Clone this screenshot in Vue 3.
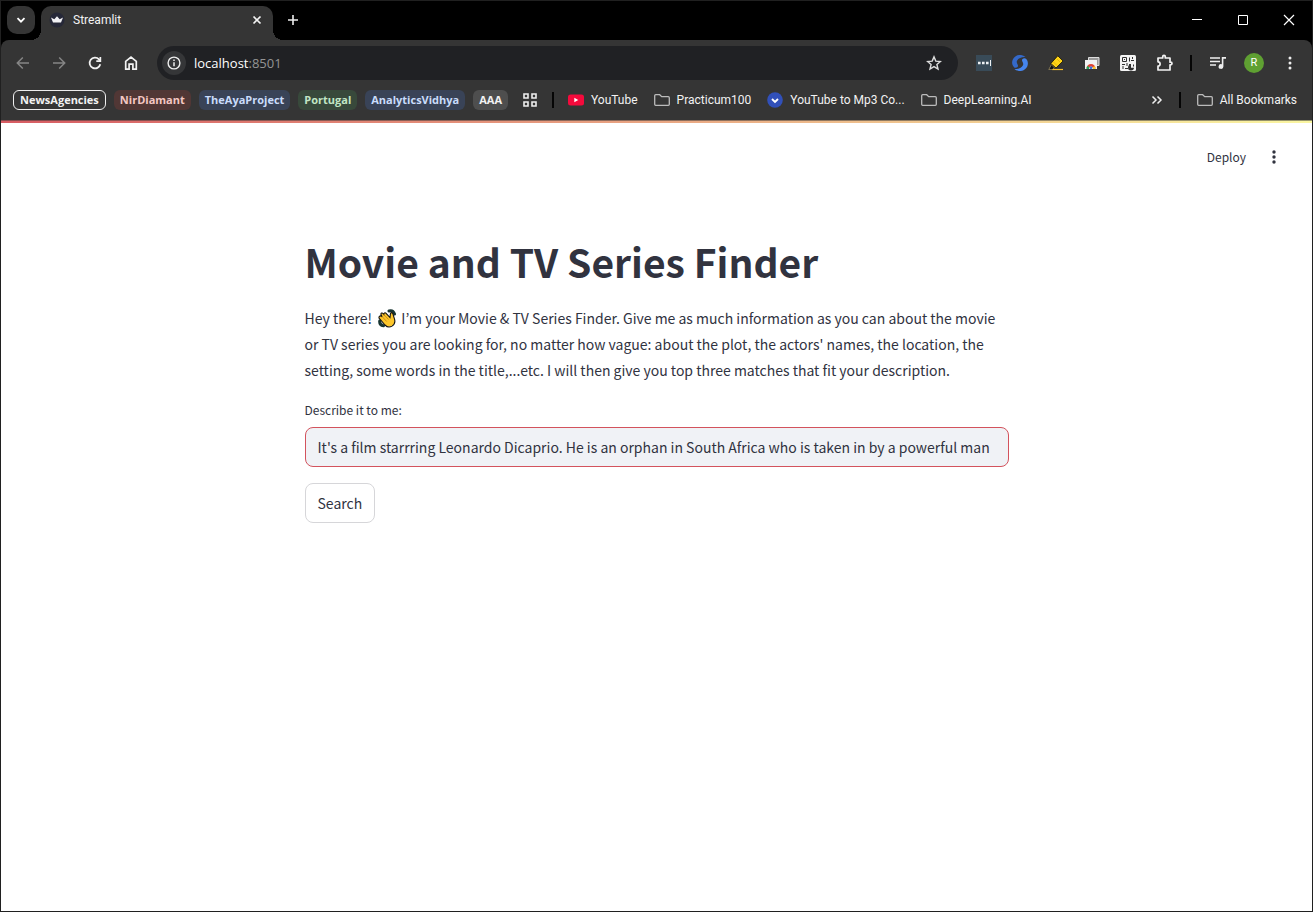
<script setup>
import { ref } from 'vue'

const query = ref("It's a film starrring Leonardo Dicaprio. He is an orphan in South Africa who is taken in by a powerful man")
const address = 'localhost:8501'
const groups = [
  { name: 'NewsAgencies', tone: 'outlined' },
  { name: 'NirDiamant', tone: 'red' },
  { name: 'TheAyaProject', tone: 'blue' },
  { name: 'Portugal', tone: 'green' },
  { name: 'AnalyticsVidhya', tone: 'blue' },
  { name: 'AAA', tone: 'grey' },
]
const bookmarks = [
  { name: 'YouTube', icon: 'youtube' },
  { name: 'Practicum100', icon: 'folder' },
  { name: 'YouTube to Mp3 Co...', icon: 'down' },
  { name: 'DeepLearning.AI', icon: 'folder' },
]
</script>

<template>
  <div class="window">
    <header class="tabstrip">
      <button class="tab-search" aria-label="Search tabs">
        <svg width="12" height="12" viewBox="0 0 12 12"><path d="M2.500 4.200 6 7.700l3.500-3.500" fill="none" stroke="#fff" stroke-width="1.800" /></svg>
      </button>
      <div class="tab">
        <svg width="16" height="16" viewBox="0 0 16 16">
          <circle cx="8" cy="8" r="7.500" fill="#262838" />
          <path d="M2 5.500 5.300 7.200 8 4.300l2.700 2.900L14 5.500l-2 5H4z" fill="#f1f1f4" />
        </svg>
        <span class="tab-title">Streamlit</span>
        <button class="icon-button small" aria-label="Close tab">
          <svg width="10" height="10" viewBox="0 0 10 10"><path d="m1.500 1.500 7 7m0-7-7 7" stroke="#f2f2f2" stroke-width="1.700" /></svg>
        </button>
      </div>
      <button class="icon-button new-tab" aria-label="New tab">
        <svg width="12" height="12" viewBox="0 0 12 12"><path d="M6 1v10M1 6h10" stroke="#eee" stroke-width="1.600" /></svg>
      </button>
      <div class="window-controls">
        <button aria-label="Minimize"><svg width="12" height="12" viewBox="0 0 12 12"><path d="M1 5.500h10" stroke="#fff" /></svg></button>
        <button aria-label="Maximize"><svg width="12" height="12" viewBox="0 0 12 12"><path d="M1.500 1.500h9v9h-9z" fill="none" stroke="#fff" /></svg></button>
        <button aria-label="Close"><svg width="12" height="12" viewBox="0 0 12 12"><path d="m1 1 10 10M11 1 1 11" stroke="#fff" stroke-width="1.200" /></svg></button>
      </div>
    </header>

    <div class="chrome">
      <nav class="toolbar">
        <div class="nav-buttons">
          <button class="icon-button" aria-label="Back"><svg width="16" height="16" viewBox="0 0 16 16"><path d="M14 8H2.500M7.800 2.500 2.300 8l5.500 5.500" fill="none" stroke="#858585" stroke-width="1.500" /></svg></button>
          <button class="icon-button" aria-label="Forward"><svg width="16" height="16" viewBox="0 0 16 16"><path d="M2 8h11.500M8.200 2.500 13.700 8l-5.500 5.500" fill="none" stroke="#858585" stroke-width="1.500" /></svg></button>
          <button class="icon-button" aria-label="Reload"><svg width="16" height="16" viewBox="0 0 16 16"><path d="M13.300 9.300A5.400 5.400 0 1 1 12 4.300l1.200 1.300" fill="none" stroke="#f2f2f2" stroke-width="1.800" /><path d="M14.200 2v5H9.300V5.300h3.200V2z" fill="#f2f2f2" /></svg></button>
          <button class="icon-button" aria-label="Home"><svg width="16" height="16" viewBox="0 0 16 16"><path d="M2.700 6.300 8 2.100l5.300 4.200v7.900H9.900V9.200H6.100v5H2.700z" fill="none" stroke="#f2f2f2" stroke-width="1.700" /></svg></button>
        </div>
        <div class="omnibox">
          <button class="site-info" aria-label="View site information"><svg width="14" height="14" viewBox="0 0 14 14"><circle cx="7" cy="7" r="5.900" fill="none" stroke="#eee" stroke-width="1.400" /><path d="M7 6.200v4M7 3.500V5" stroke="#eee" stroke-width="1.500" /></svg></button>
          <a class="address" href="#">{{ address.split(':')[0] }}<span>:{{ address.split(':')[1] }}</span></a>
          <button class="icon-button" aria-label="Bookmark this tab"><svg width="16" height="16" viewBox="0 0 16 16"><path d="m8 1.900 1.800 4.200 4.600.4-3.500 3 1.100 4.500L8 11.600 4 14l1.100-4.500-3.500-3 4.600-.4z" fill="none" stroke="#ddd" stroke-width="1.400" /></svg></button>
        </div>
        <div class="extensions">
          <button class="icon-button" aria-label="Password manager"><svg width="16" height="16" viewBox="0 0 16 16"><path d="M0 0h16v16H0z" fill="#394b58" /><path d="M2 6.700h2.600v2.600H2zM6 6.700h2.600v2.600H6zM10 6.700h2.600v2.600H10zM14 5h1v6h-1z" fill="#eef1f3" /></svg></button>
          <button class="icon-button" aria-label="Sync extension"><svg width="16" height="16" viewBox="0 0 16 16"><path d="M13.500 2A8 8 0 0 0 3 1.800C-.5 4.500-.8 9.500 2 12.200c1 .9 2.800.6 3.700-.5C7 10 3.900 8.500 5 5.800 6.300 2.900 10 1.800 13.500 2z" fill="#3469c9" /><path d="M2.500 14A8 8 0 0 0 13 14.200c3.500-2.700 3.800-7.700 1-10.400-1-.9-2.800-.6-3.700.5C9 6 12.100 7.500 11 10.200 9.700 13.100 6 14.200 2.500 14z" fill="#4585ee" /></svg></button>
          <button class="icon-button" aria-label="Highlighter"><svg width="16" height="16" viewBox="0 0 16 16"><path d="M4 14.500h11" stroke="#f6bd27" stroke-width="1.200" /><path d="m3.500 9.500-2.700 5h3.500l2-1.700z" fill="#111" stroke="#d9c07a" stroke-width=".5" /><path d="M9.800.8 15 6 8 13 2.800 8.500z" fill="#ffd416" stroke="#171305" stroke-width=".8" stroke-linejoin="round" /><path d="m5.500 7 4 4M9 4l3 3" stroke="#e2ac06" stroke-width=".8" /></svg></button>
          <button class="icon-button" aria-label="Web store"><svg width="16" height="16" viewBox="0 0 16 16"><path d="M4.500 2.500H15v8H4.500z" fill="#999" stroke="#ddd" /><path d="M1 5h12v9H1z" fill="#f2f2f2" /><path d="M2.500 13.500a4.500 4.500 0 0 1 9 0H9a2 2 0 0 0-4 0z" fill="#df4436" /><path d="M2.500 14a4.500 4.500 0 0 1 .8-3L5.200 12 5 14z" fill="#24a35a" /><path d="M10.700 11a4.500 4.500 0 0 1 .8 3H9l-.3-1.800z" fill="#fbc526" /><circle cx="7" cy="12.800" r="1.400" fill="#3874de" /></svg></button>
          <button class="icon-button" aria-label="QR code"><svg width="16" height="16" viewBox="0 0 16 16"><rect width="16" height="16" rx="1.500" fill="#f4f4f4" /><path d="M2.500 2.500h4v4h-4zM9.500 2.500v4M12.500 2v2M11 5.500h3M2 9.500h3M7 8v3M3 11v3M5 13.500h3M9 9.500h2M13.500 9.500v2" fill="none" stroke="#303030" /><path d="M4 4h1v1H4z" fill="#303030" /><path d="M11 9.500a3 3 0 1 0 3 3.300h-3z" fill="#303030" /></svg></button>
          <button class="icon-button" aria-label="Extensions"><svg width="18" height="18" viewBox="0 0 18 18"><path d="M3 4h4.700V2.700a1.300 1.300 0 0 1 2.600 0V4H15v4.200h.7a1.300 1.300 0 0 1 0 2.600H15V16H3v-4c2.800-.2 2.800-4 0-4.200z" fill="none" stroke="#f2f2f2" stroke-width="1.700" stroke-linejoin="round" /></svg></button>
          <span class="divider"></span>
          <button class="icon-button" aria-label="Media controls"><svg width="16" height="16" viewBox="0 0 16 16"><path d="M0 3h10M0 6.500h10M0 10h6" stroke="#eee" stroke-width="1.500" /><path d="M16 2h-4.200v7.200a2.400 2.400 0 1 0 1.600 2.300V3.800H16z" fill="#eee" /></svg></button>
          <button class="avatar" aria-label="Profile">R</button>
          <button class="icon-button" aria-label="Menu"><svg width="4" height="16" viewBox="0 0 4 16" fill="#eee"><circle cx="2" cy="3" r="1.500" /><circle cx="2" cy="8" r="1.500" /><circle cx="2" cy="13" r="1.500" /></svg></button>
        </div>
      </nav>

      <nav class="bookmarks">
        <div class="groups">
          <button v-for="g in groups" :key="g.name" class="chip" :class="g.tone">{{ g.name }}</button>
        </div>
        <button class="icon-button apps" aria-label="Apps"><svg width="16" height="16" viewBox="0 0 16 16"><path d="M2 2h4v4H2zM10 2h4v4h-4zM2 10h4v4H2zM10 10h4v4h-4z" fill="none" stroke="#eee" stroke-width="1.600" /></svg></button>
        <span class="divider"></span>
        <div class="links">
          <a v-for="b in bookmarks" :key="b.name" href="#">
            <svg v-if="b.icon === 'youtube'" width="16" height="16" viewBox="0 0 16 16"><rect y="2.500" width="16" height="11" rx="2.500" fill="#f50a3c" /><path d="m6.300 5.800 4 2.200-4 2.200z" fill="#fff" /></svg>
            <svg v-else-if="b.icon === 'folder'" width="16" height="16" viewBox="0 0 16 16"><path d="M.7 3.700q0-1 1-1h4l2 2h6.600q1 0 1 1v6.600q0 1-1 1H1.700q-1 0-1-1z" fill="none" stroke="#bbb" stroke-width="1.300" /></svg>
            <svg v-else width="16" height="16" viewBox="0 0 16 16"><circle cx="8" cy="8" r="7.800" fill="#3150b9" /><path d="M5 7l3 3 3-3" fill="none" stroke="#fff" stroke-width="1.900" /></svg>
            <span>{{ b.name }}</span>
          </a>
        </div>
        <button class="icon-button more" aria-label="More bookmarks"><svg width="12" height="12" viewBox="0 0 12 12"><path d="m1.500 2.500 3.500 3.500-3.500 3.500M6.500 2.500 10 6 6.500 9.500" fill="none" stroke="#eee" stroke-width="1.500" /></svg></button>
        <span class="divider"></span>
        <a class="all" href="#">
          <svg width="16" height="16" viewBox="0 0 16 16"><path d="M.7 3.700q0-1 1-1h4l2 2h6.600q1 0 1 1v6.600q0 1-1 1H1.700q-1 0-1-1z" fill="none" stroke="#bbb" stroke-width="1.300" /></svg>
          <span>All Bookmarks</span>
        </a>
      </nav>
    </div>

    <div class="page">
      <div class="decoration"></div>
      <header class="app-header">
        <button class="deploy">Deploy</button>
        <button class="icon-button" aria-label="App menu"><svg width="4" height="16" viewBox="0 0 4 16" fill="#31333f"><circle cx="2" cy="3" r="1.700" /><circle cx="2" cy="8" r="1.700" /><circle cx="2" cy="13" r="1.700" /></svg></button>
      </header>
      <main>
        <h1>Movie and TV Series Finder</h1>
        <p>
          Hey there!
          <svg class="wave" width="19" height="19" viewBox="0 0 19 19" role="img" aria-label="Waving hand">
            <path d="M11 2c3-.8 4.800 1 5.500 3M1.700 12c-.2 2.600 1.300 4.300 3.800 4.700" fill="none" stroke="#173431" stroke-width="3" stroke-linecap="round" />
            <path d="M1.600 7.300c.8-1 1.700-.2 2.500.5L3 5.500c-.3-1.500 1.200-2 2-1l.8 1c-.2-1.700 1.400-2.200 2.300-1.200l3.900 4.200.4-3.600c.2-1.700 2.200-1.700 2.500-.1l1.300 4.300c1.300 3.300.3 6.400-2.200 8-2.300 1.400-5.200.8-7-1.100L1.700 10c-1-1-1-2-.1-2.700z" fill="#fcc62b" stroke="#111" stroke-width="1.100" />
            <path d="m4 7.500 4.700 5M5.800 5.500l4.700 5" stroke="#c78814" stroke-width=".9" />
          </svg>
          I’m your Movie &amp; TV Series Finder. Give me as much information as you can about the movie or TV series you are looking for, no matter how vague: about the plot, the actors' names, the location, the setting, some words in the title,...etc. I will then give you top three matches that fit your description.
        </p>
        <form @submit.prevent>
          <label for="query">Describe it to me:</label>
          <input id="query" v-model="query" type="text" />
          <button class="search" type="submit">Search</button>
        </form>
      </main>
    </div>
  </div>
</template>

<style>
body { background: #fff; }
</style>

<style scoped>
* { box-sizing: border-box; }
.window {
  display: flex;
  flex-direction: column;
  min-height: 100vh;
  border: 1px solid #202020;
  background: #000;
  font: 12px/16px Roboto, "Open Sans", sans-serif;
  color: #f2f2f2;
}
button { border: 0; padding: 0; background: none; font: inherit; color: inherit; }
a { color: inherit; text-decoration: none; }
svg { display: block; flex: none; }
.icon-button { display: grid; place-items: center; flex: none; width: 20px; height: 20px; }
.icon-button.small { width: 16px; }
.divider { flex: none; width: 2px; height: 16px; background: #050505; }

.tabstrip { display: flex; height: 39px; padding: 5px 0 0 6px; }
.tab-search { display: grid; place-items: center; width: 28px; height: 28px; border-radius: 10px; background: #353535; }
.tab {
  position: relative;
  display: flex;
  align-items: center;
  gap: 8px;
  width: 232px;
  margin-left: 6px;
  padding: 0 8px 6px 8px;
  border-radius: 10px 10px 0 0;
  background: #353535;
}
.tab::before, .tab::after {
  content: "";
  position: absolute;
  bottom: 0;
  width: 10px;
  height: 10px;
}
.tab::before { right: 100%; background: radial-gradient(circle at 0 0, transparent 10px, #353535 10px); }
.tab::after { left: 100%; background: radial-gradient(circle at 100% 0, transparent 10px, #353535 10px); }
.tab-title { flex: 1; }
.new-tab { margin: 4px 0 0 10px; }
.window-controls { display: flex; margin-left: auto; }
.window-controls button { display: grid; place-items: center; width: 46px; height: 28px; }

.chrome { border-radius: 8px 8px 0 0; background: #353535; }
.toolbar { display: flex; align-items: center; height: 46px; padding: 0 12px; }
.nav-buttons { display: flex; gap: 16px; }
.omnibox {
  display: flex;
  flex: 1;
  align-items: center;
  height: 34px;
  margin-left: 16px;
  padding: 0 14px 0 5px;
  border-radius: 17px;
  background: #202124;
}
.site-info { display: grid; place-items: center; width: 24px; height: 24px; border-radius: 12px; background: #353638; }
.address { flex: 1; margin-left: 8px; font-family: "Open Sans", sans-serif; font-size: 13px; color: #fff; }
.address span { color: #949494; }
.extensions { display: flex; align-items: center; gap: 16px; margin-left: 16px; }
.avatar { width: 20px; height: 20px; border-radius: 10px; background: #5fa032; font-size: 11px; line-height: 20px; color: #fff; }

.bookmarks { display: flex; align-items: center; height: 28px; margin-bottom: 6px; padding: 0 15px 0 12px; }
.groups { display: flex; gap: 8px; }
.chip { height: 20px; padding: 0 6px; border-radius: 6px; font: 700 11px/20px "Open Sans", sans-serif; }
.chip.outlined { border: 1px solid #eee; line-height: 18px; }
.chip.red { background: #513735; color: #f4c7c3; }
.chip.blue { background: #394357; color: #c9dcfb; }
.chip.green { background: #38493b; color: #c1e6c5; }
.chip.grey { background: #4e4e4e; color: #f2f2f2; }
.apps { margin: 0 12px; }
.links { display: flex; gap: 16px; margin-left: 14px; }
.links a, .all { display: flex; align-items: center; gap: 7px; white-space: nowrap; }
.more { margin: 0 12px 0 auto; }
.all { margin-left: 16px; }

.page {
  flex: 1;
  background: #fff;
  color: #31333f;
  font: 14px/26px "Noto Sans CJK KR", "Noto Sans", sans-serif;
}
.decoration {
  height: 3px;
  background: linear-gradient(90deg, #d75c63, #e9a683 50%, #faf6a2);
  box-shadow: inset 0 1px rgba(53, 53, 53, 0.5);
}
.app-header { display: flex; align-items: center; justify-content: flex-end; gap: 18px; height: 68px; padding: 0 28px; }
.deploy { font-size: 12px; line-height: 20px; }
main { width: 100%; max-width: 736px; margin: 0 auto; padding: 42px 16px 0; }
h1 { margin: 0; font-size: 39px; line-height: 56px; font-weight: 700; }
p { margin: 16px 0 0; }
.wave { display: inline-block; margin: 0 1px 0 3px; vertical-align: -4px; }
form { display: flex; flex-direction: column; align-items: flex-start; margin-top: 16px; }
label { font-size: 12px; line-height: 22px; }
input {
  width: 100%;
  height: 40px;
  margin: 6px 0 16px;
  padding: 0 8px 0 12px;
  border: 1px solid #d3535d;
  border-radius: 8px;
  outline: none;
  background: #f0f2f6;
  font: inherit;
  color: inherit;
}
.search { height: 40px; padding: 0 12px; border: 1px solid #d6d6d9; border-radius: 8px; }
</style>
